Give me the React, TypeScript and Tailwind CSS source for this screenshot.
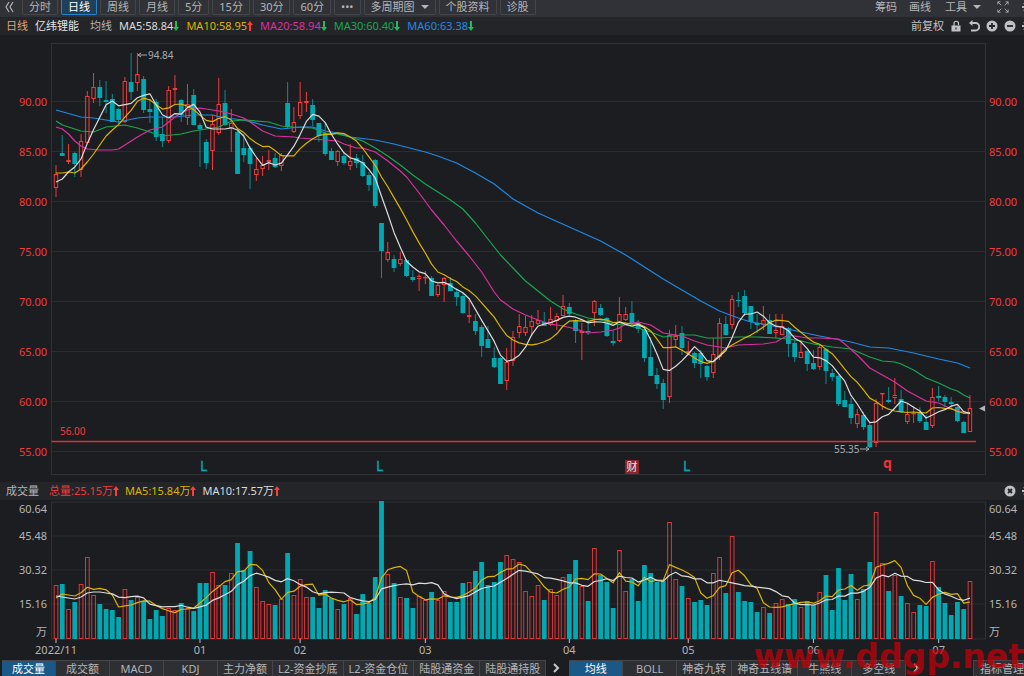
import { useState } from "react";
import clsx from "clsx";

type Candle = [number, number, number, number, number, number];
type Point = [number, number];

const STEP = 6.26;
const LEFT = 51.5;
const RIGHT = 985.5;
const VOLUME_BASE = 639;

const RED = "#f23a3c";
const TEAL = "#00a9b2";
const GRID = "#2b2c30";

const MA5 = "#dcdcdc";
const MA10 = "#dcb400";
const MA20 = "#d8329f";
const MA30 = "#17a851";
const MA60 = "#1f8ae4";

// high, body top, body bottom, low, volume, up (chart units)
const candles: Candle[] = [
  [165, 174, 188, 197, 54, 1], [135, 153, 156, 156, 55, 0], [144, 160, 162, 164, 30, 1],
  [152, 153, 164, 177, 37, 0], [134, 141, 170, 177, 55, 1], [91, 96, 143, 144, 82, 1],
  [73, 87, 99, 103, 44, 1], [80, 87, 98, 106, 35, 0], [81, 100, 102, 113, 30, 0],
  [94, 99, 122, 122, 29, 0], [108, 109, 120, 124, 22, 0], [77, 81, 122, 123, 50, 1],
  [53, 82, 92, 100, 39, 0], [53, 74, 83, 91, 42, 1], [76, 79, 110, 113, 38, 0],
  [99, 109, 112, 123, 20, 0], [99, 102, 137, 141, 29, 0], [117, 134, 141, 147, 23, 0],
  [86, 90, 141, 143, 31, 1], [75, 88, 90, 105, 29, 1], [99, 100, 115, 122, 36, 0],
  [84, 104, 118, 125, 31, 1], [89, 95, 125, 125, 28, 0], [123, 125, 129, 167, 56, 0],
  [139, 142, 163, 169, 56, 0], [115, 124, 151, 170, 67, 1], [78, 104, 133, 135, 54, 1],
  [90, 103, 125, 126, 54, 0], [109, 123, 128, 152, 66, 1], [131, 132, 174, 174, 96, 0],
  [134, 148, 155, 162, 69, 0], [146, 148, 164, 189, 88, 0], [158, 169, 175, 181, 52, 1],
  [156, 165, 169, 176, 38, 1], [150, 160, 162, 170, 35, 1], [153, 158, 167, 168, 34, 0],
  [153, 155, 166, 171, 40, 1], [82, 103, 127, 128, 86, 0], [107, 122, 132, 133, 44, 1],
  [82, 102, 116, 119, 60, 1], [92, 101, 103, 112, 42, 1], [99, 105, 120, 126, 42, 0],
  [123, 123, 136, 142, 31, 0], [122, 133, 154, 156, 49, 0], [148, 151, 160, 160, 41, 0],
  [150, 151, 162, 166, 30, 1], [153, 156, 163, 165, 35, 0], [144, 161, 166, 170, 41, 1],
  [154, 158, 163, 168, 25, 0], [155, 162, 176, 177, 45, 0], [172, 175, 185, 191, 36, 0],
  [159, 160, 206, 208, 62, 0], [223, 223, 251, 278, 138, 0], [242, 252, 260, 262, 65, 1],
  [255, 259, 268, 272, 56, 0], [252, 259, 264, 266, 42, 1], [259, 260, 276, 277, 41, 0],
  [270, 277, 280, 282, 31, 0], [274, 276, 279, 291, 43, 1], [271, 277, 278, 284, 39, 1],
  [276, 278, 296, 296, 47, 0], [284, 285, 295, 297, 39, 1], [277, 278, 285, 302, 48, 1],
  [277, 283, 291, 291, 37, 0], [288, 292, 297, 306, 37, 0], [293, 296, 313, 314, 56, 0],
  [298, 315, 317, 323, 57, 1], [314, 321, 331, 335, 68, 0], [325, 327, 346, 357, 77, 0],
  [326, 339, 348, 348, 54, 0], [347, 358, 367, 368, 57, 0], [357, 358, 384, 384, 77, 0],
  [348, 362, 381, 390, 84, 1], [331, 337, 361, 366, 80, 1], [314, 326, 333, 338, 77, 1],
  [316, 327, 333, 336, 48, 1], [315, 321, 327, 336, 43, 1], [310, 320, 324, 325, 54, 1],
  [312, 322, 326, 326, 39, 0], [307, 319, 325, 326, 50, 1], [313, 316, 321, 330, 44, 1],
  [295, 306, 316, 316, 62, 1], [303, 307, 314, 315, 65, 0], [319, 320, 331, 343, 79, 0],
  [323, 331, 333, 360, 53, 1], [319, 331, 332, 335, 38, 0], [300, 301, 313, 326, 91, 1],
  [304, 308, 315, 316, 64, 0], [317, 318, 336, 337, 57, 0], [330, 341, 343, 346, 31, 0],
  [297, 314, 341, 342, 89, 1], [307, 314, 320, 321, 48, 1], [301, 313, 323, 325, 60, 0],
  [320, 323, 329, 333, 38, 0], [327, 330, 358, 362, 74, 0], [337, 357, 376, 376, 66, 0],
  [368, 375, 384, 389, 57, 0], [379, 383, 400, 409, 58, 0], [330, 335, 397, 403, 117, 1],
  [325, 336, 340, 347, 60, 1], [326, 333, 348, 355, 53, 0], [341, 351, 353, 354, 41, 1],
  [352, 353, 363, 368, 37, 0], [350, 353, 364, 378, 39, 0], [365, 366, 377, 381, 34, 0],
  [338, 354, 373, 378, 66, 1], [318, 323, 357, 360, 82, 1], [316, 324, 335, 335, 46, 0],
  [295, 299, 325, 329, 103, 1], [292, 300, 301, 307, 47, 0], [290, 296, 313, 316, 38, 0],
  [306, 306, 322, 329, 37, 0], [314, 323, 325, 333, 27, 0], [306, 320, 325, 330, 32, 1],
  [314, 320, 334, 334, 26, 0], [314, 330, 333, 338, 36, 1], [314, 326, 335, 335, 40, 1],
  [327, 328, 344, 357, 35, 0], [340, 343, 357, 362, 40, 0], [340, 352, 358, 358, 32, 1],
  [350, 351, 364, 371, 38, 0], [350, 363, 369, 370, 34, 0], [345, 347, 367, 370, 47, 1],
  [348, 349, 371, 384, 64, 0], [369, 373, 377, 381, 29, 0], [375, 376, 404, 406, 71, 0],
  [391, 400, 407, 407, 39, 0], [398, 404, 418, 424, 65, 0], [409, 414, 424, 428, 40, 1],
  [412, 415, 427, 430, 50, 0], [423, 425, 447, 448, 77, 0], [399, 403, 443, 447, 127, 1],
  [393, 393, 394, 410, 76, 1], [387, 400, 402, 403, 48, 0], [378, 395, 398, 404, 64, 1],
  [390, 399, 412, 413, 43, 0], [403, 414, 422, 424, 36, 1], [406, 413, 414, 423, 27, 1],
  [407, 412, 421, 423, 34, 0], [415, 422, 430, 430, 33, 0], [388, 397, 426, 428, 78, 1],
  [386, 396, 398, 401, 52, 0], [395, 397, 402, 407, 36, 0], [397, 402, 404, 408, 24, 0],
  [404, 407, 421, 422, 37, 0], [421, 422, 433, 433, 30, 0], [395, 408, 432, 432, 58, 1],
];

const ma20: Point[] = [
  [0, 127], [1, 129], [2, 134], [3, 141], [4, 146], [5, 149], [7, 150], [9, 150], [10, 149],
  [11, 145], [13, 137], [15, 130], [17, 127], [18, 122], [19, 117], [20, 113], [21, 110],
  [23, 108], [24, 109], [26, 111], [28, 114], [30, 118], [31, 122], [33, 131], [35, 136],
  [38, 137], [39, 138], [41, 139], [43, 140], [45, 141], [46, 144], [48, 148], [49, 148],
  [51, 152], [53, 161], [55, 171], [56, 177], [58, 193], [60, 210], [62, 225], [64, 241],
  [66, 256], [68, 272], [70, 292], [71, 300], [73, 309], [75, 315], [77, 320], [79, 324],
  [81, 326], [83, 329], [85, 333], [87, 332], [89, 330], [90, 328], [91, 324], [93, 322],
  [95, 325], [97, 333], [98, 334], [100, 336], [102, 341], [104, 345], [107, 348], [109, 345],
  [113, 344], [115, 342], [117, 335], [120, 338], [122, 338], [125, 339], [126, 344],
  [128, 355], [130, 368], [132, 375], [134, 382], [136, 391], [139, 401], [141, 403],
  [143, 409], [145, 412], [146, 413],
];

const ma30: Point[] = [
  [0, 121], [1, 125], [2, 127], [4, 131], [6, 132], [8, 127], [11, 125], [13, 128], [15, 132],
  [17, 136], [20, 134], [22, 131], [24, 129], [26, 127], [28, 121], [30, 120], [34, 122],
  [36, 126], [38, 127], [41, 128], [43, 133], [45, 134], [47, 137], [49, 141], [51, 148],
  [53, 156], [55, 165], [57, 175], [59, 184], [61, 192], [63, 200], [65, 209], [67, 223],
  [69, 239], [71, 255], [73, 268], [75, 281], [77, 291], [79, 301], [81, 309], [83, 314],
  [85, 318], [87, 320], [89, 324], [91, 325], [93, 328], [95, 332], [97, 337], [100, 335],
  [102, 335], [104, 338], [106, 338], [109, 337], [112, 337], [115, 338], [117, 339],
  [119, 341], [121, 344], [124, 347], [127, 349], [130, 357], [132, 361], [134, 362],
  [135, 364], [137, 370], [139, 378], [141, 383], [143, 389], [144, 391], [145, 395], [146, 398],
];

const ma60: Point[] = [
  [0, 110], [4, 117], [6, 118], [9, 121], [10, 122], [13, 118], [15, 117], [19, 117], [22, 115],
  [25, 115], [27, 118], [30, 120], [33, 125], [36, 129], [39, 127], [41, 127], [43, 131],
  [45, 133], [47, 137], [51, 140], [54, 144], [59, 152], [61, 156], [64, 163], [67, 173],
  [70, 184], [73, 199], [77, 213], [82, 227], [87, 241], [91, 255], [95, 271], [97, 279],
  [100, 290], [103, 301], [106, 311], [109, 318], [111, 322], [113, 324], [117, 329],
  [119, 332], [122, 336], [127, 342], [130, 347], [133, 348], [137, 353], [141, 359],
  [144, 363], [146, 368],
];

const closes = candles.map((c) => (c[5] ? c[1] : c[2]));
const volumes = candles.map((c) => VOLUME_BASE - c[4]);

const months: [number, string][] = [
  [0, "2022/11"],
  [23, "01"],
  [39, "02"],
  [59, "03"],
  [82, "04"],
  [101, "05"],
  [121, "06"],
  [141, "07"],
];

const prices = ["90.00", "85.00", "80.00", "75.00", "70.00", "65.00", "60.00", "55.00"];
const volumeLabels: [string, number][] = [
  ["60.64", 509],
  ["45.48", 536],
  ["30.32", 570],
  ["15.16", 604],
  ["万", 632],
];

const periods = ["分时", "日线", "周线", "月线", "5分", "15分", "30分", "60分", "•••", "多周期图", "个股资料", "诊股"];
const volumeTabs = ["成交量", "成交额", "MACD", "KDJ", "主力净额", "L2-资金抄底", "L2-资金仓位", "陆股通资金", "陆股通持股"];
const priceTabs = ["均线", "BOLL", "神奇九转", "神奇五线谱", "牛熊线", "多空线"];

const xAt = (i: number) => 56 + i * STEP;

// the first values reach back before the visible range, so they are given
function movingAverage(values: number[], size: number, lead: number[]): Point[] {
  return values.map((_, i) => {
    if (i < size - 1) return [i, lead[i]];
    const part = values.slice(i - size + 1, i + 1);
    return [i, part.reduce((a, b) => a + b, 0) / size];
  });
}

const ma5 = movingAverage(closes, 5, [182, 179, 172, 167]);
const ma10 = movingAverage(closes, 10, [173, 173, 172, 173, 169, 162, 154, 145, 136]);
const volMa5 = movingAverage(volumes, 5, [598, 594, 595, 596]);
const volMa10 = movingAverage(volumes, 10, [596, 597, 598, 599, 597, 593, 592, 592, 593]);

function Line({ points, color }: { points: Point[]; color: string }) {
  return (
    <polyline
      points={points.map(([i, y]) => `${xAt(i).toFixed(1)},${y.toFixed(1)}`).join(" ")}
      fill="none"
      stroke={color}
      strokeWidth="1.2"
      strokeLinejoin="round"
    />
  );
}

function PriceChart() {
  return (
    <svg viewBox="0 35 1024 447" className="block w-full h-auto text-[11px]" role="img" aria-label="日线">
      {prices.map((p, i) => {
        const y = 102 + i * 50;
        return (
          <g key={p}>
            <line x1={LEFT} x2={RIGHT} y1={y - 0.5} y2={y - 0.5} stroke={GRID} />
            <text x="47" y={y + 4} textAnchor="end" fill={RED}>{p}</text>
            <text x="989" y={y + 4} fill={RED}>{p}</text>
          </g>
        );
      })}
      <rect x={LEFT} y="43.5" width={RIGHT - LEFT} height="431" fill="none" stroke="#303135" />
      {candles.map(([high, top, bottom, low, , up], i) => {
        const x = xAt(i);
        const h = Math.max(bottom - top, 1);
        return up ? (
          <g key={i} stroke={RED}>
            <path d={`M${x} ${high}V${top}M${x} ${bottom}V${low}`} />
            <rect x={x - 1.7} y={top + 0.5} width="3.4" height={Math.max(h - 1, 0.4)} fill="none" />
          </g>
        ) : (
          <g key={i}>
            <path d={`M${x} ${high}V${low}`} stroke={TEAL} strokeOpacity="0.8" />
            <rect x={x - 2.4} y={top} width="4.8" height={h} fill={TEAL} />
          </g>
        );
      })}
      <Line points={ma60} color={MA60} />
      <Line points={ma30} color={MA30} />
      <Line points={ma20} color={MA20} />
      <Line points={ma10} color={MA10} />
      <Line points={ma5} color={MA5} />

      <line x1={LEFT} x2="976" y1="441.5" y2="441.5" stroke="#dc3236" strokeWidth="1.3" />
      <text x="60" y="435" fontSize="10" fill={RED}>56.00</text>

      <path d="M138 55H147M141 53L138 55L141 57" stroke="#a8a9ab" fill="none" />
      <text x="148" y="59" fontSize="10" fill="#a8a9ab">94.84</text>
      <path d="M860 449H869M866 447L869 449L866 451" stroke="#a8a9ab" fill="none" />
      <text x="834" y="453" fontSize="10" fill="#a8a9ab">55.35</text>

      <path d="M979 408.5L985 405.5V411.5Z" fill="#b4b5b7" />

      {[200, 376, 683].map((x) => (
        <text key={x} x={x} y="471" fontSize="14" fill={TEAL} stroke={TEAL} strokeWidth="0.3">L</text>
      ))}
      <rect x="625" y="460" width="14" height="14" rx="1" fill="#8c2427" />
      <text x="632" y="471" textAnchor="middle" fill="#e6e6e6">财</text>
      <text x="883" y="468" fontSize="14" fontWeight="700" fill="#ee3338">q</text>
    </svg>
  );
}

function VolumeChart() {
  return (
    <svg viewBox="0 500 1024 160" className="block w-full h-auto text-[11px]" role="img" aria-label="成交量">
      {[536, 570, 604].map((y) => (
        <line key={y} x1={LEFT} x2={RIGHT} y1={y} y2={y} stroke={GRID} />
      ))}
      <rect x={LEFT} y="502" width={RIGHT - LEFT} height="137" fill="none" stroke="#303135" />
      {volumeLabels.map(([label, y]) => (
        <g key={label} fill="#b4b5b7">
          <text x="47" y={y + 4} textAnchor="end">{label}</text>
          <text x="989" y={y + 4}>{label}</text>
        </g>
      ))}
      {candles.map(([, , , , volume, up], i) => {
        const x = xAt(i);
        const y = VOLUME_BASE - volume;
        return up ? (
          <rect key={i} x={x - 1.8} y={y + 0.5} width="3.7" height={volume - 1} fill="none" stroke={RED} strokeOpacity="0.9" />
        ) : (
          <rect key={i} x={x - 2.4} y={y} width="4.8" height={volume} fill={TEAL} />
        );
      })}
      <Line points={volMa5} color={MA10} />
      <Line points={volMa10} color={MA5} />
      {months.map(([i, label]) => (
        <g key={label}>
          <line x1={xAt(i)} x2={xAt(i)} y1="639" y2="643" stroke="#c0c1c3" />
          <text x={xAt(i)} y="654" textAnchor="middle" fill="#b4b5b7">{label}</text>
        </g>
      ))}
    </svg>
  );
}

function Arrow({ up }: { up?: boolean }) {
  return (
    <svg viewBox="0 0 6 10" className="w-[6px] h-[10px]" fill={up ? "#ff3b3b" : "#18c156"}>
      <path d={up ? "M3 0L6 4H4V10H2V4H0Z" : "M3 10L0 6H2V0H4V6H6Z"} />
    </svg>
  );
}

function Value({ text, color, up }: { text: string; color: string; up?: boolean }) {
  return (
    <span className="flex items-center" style={{ color }}>
      {text}
      <Arrow up={up} />
    </span>
  );
}

function Caret() {
  return (
    <svg viewBox="0 0 8 4" className="w-2 h-1" fill="currentColor">
      <path d="M0 0H8L4 4Z" />
    </svg>
  );
}

function Gear() {
  return (
    <svg viewBox="0 0 12 12" className="w-3 h-3 shrink-0" fill="none" stroke="currentColor" strokeWidth="2">
      <circle cx="6" cy="6" r="3" />
      <path d="M6 0V3M6 9V12M0 6H3M9 6H12M2 2L4 4M8 8L10 10M10 2L8 4M4 8L2 10" />
    </svg>
  );
}

function Next() {
  return (
    <button type="button" aria-label="更多" className="w-[23px] pr-1 flex items-center justify-center text-[#c8c9cb]">
      <svg viewBox="0 0 8 10" className="w-2 h-[10px]" fill="none" stroke="currentColor" strokeWidth="2">
        <path d="M2 1L6 5L2 9" />
      </svg>
    </button>
  );
}

function Tabs({ items, active, onPick }: { items: string[]; active: string; onPick: (v: string) => void }) {
  return (
    <div className="flex shrink-0">
      {items.map((item) => (
        <button
          key={item}
          type="button"
          onClick={() => onPick(item)}
          className={clsx(
            "min-w-[54px] px-[5px] border border-l-0 border-b-0 border-[#45464a] whitespace-nowrap",
            item === active ? "bg-[#1a5888] text-white" : "bg-[#2e2f33] text-[#b4b5b7]"
          )}
        >
          {item}
        </button>
      ))}
    </div>
  );
}

export default function App() {
  const [period, setPeriod] = useState("日线");
  const [volumeTab, setVolumeTab] = useState("成交量");
  const [priceTab, setPriceTab] = useState("均线");

  return (
    <div className="relative min-h-screen overflow-hidden bg-[#1c1d20] text-[#b4b5b7] text-[11px] leading-[14px] font-['Noto_Sans','Noto_Sans_CJK_SC',sans-serif]">
      <header className="flex justify-between h-[17px] overflow-hidden bg-[#313237]">
        <div className="flex items-start">
          <button type="button" aria-label="收起" className="w-[22px] h-[14px] pl-[5px] flex items-center">
            <svg viewBox="0 0 9 12" className="w-[9px] h-3" fill="none" stroke="#b4b5b7" strokeWidth="1.2">
              <path d="M4 1L1 6L4 11M8 1L5 6L8 11" />
            </svg>
          </button>
          <div className="flex gap-[3px]">
            {periods.map((item) => (
              <button
                key={item}
                type="button"
                onClick={() => setPeriod(item)}
                className={clsx(
                  "h-[15px] px-[6px] border border-t-0 rounded-b-xs flex items-center gap-1.5 whitespace-nowrap",
                  item === period ? "bg-[#203f58] border-[#2484cc] text-white" : "border-[#45464a]"
                )}
              >
                {item}
                {item === "多周期图" && <Caret />}
              </button>
            ))}
          </div>
        </div>
        <div className="flex items-center h-[14px]">
          <button type="button" className="mr-3">筹码</button>
          <button type="button" className="mr-[14px]">画线</button>
          <button type="button" className="mr-4 flex items-center gap-1.5">
            工具
            <Caret />
          </button>
          <button type="button" aria-label="全屏" className="mr-[13px]">
            <svg viewBox="0 0 14 14" className="w-3 h-[14px]" fill="none" stroke="currentColor">
              <path d="M1 4V1H4M1 1L5 5M10 1H13V4M13 1L9 5M1 10V13H4M1 13L5 9M10 13H13V10M13 13L9 9" />
            </svg>
          </button>
          <span className="w-[2px] overflow-hidden flex"><Gear /></span>
        </div>
      </header>

      <div className="flex justify-between h-[18px] pl-[6px] bg-[#242529]">
        <div className="flex items-center gap-[7px]">
          <span className="text-[#e0a273]">日线</span>
          <span className="text-[#e4e4e4] mr-1">亿纬锂能</span>
          <span>均线</span>
          <Value text="MA5:58.84" color={MA5} />
          <Value text="MA10:58.95" color={MA10} up />
          <Value text="MA20:58.94" color={MA20} />
          <Value text="MA30:60.40" color={MA30} />
          <Value text="MA60:63.38" color={MA60} />
        </div>
        <div className="flex items-center gap-[6px] text-[#c0c1c3]">
          <button type="button">前复权</button>
          <button type="button" aria-label="锁定">
            <svg viewBox="0 0 12 12" className="w-3 h-3">
              <path d="M4 6V3.5A2.2 2.2 0 0 1 8.500 3.500V5" fill="none" stroke="currentColor" strokeWidth="1.2" />
              <path d="M1.500 5.500H10.500V11.500H1.500ZM5.400 7.500V9.500H6.600V7.500Z" fill="currentColor" fillRule="evenodd" />
            </svg>
          </button>
          <button type="button" aria-label="撤销">
            <svg viewBox="0 0 12 12" className="w-3 h-3" fill="none" stroke="currentColor" strokeWidth="1.8">
              <path d="M2 3H7.500A3.500 3.500 0 0 1 7.500 10.500H3" />
              <path d="M4.500 0L1 3L4.500 6Z" fill="currentColor" stroke="none" />
            </svg>
          </button>
          <button type="button" aria-label="放大">
            <svg viewBox="0 0 12 12" className="w-3 h-3">
              <circle cx="6" cy="6" r="5.500" fill="currentColor" />
              <path d="M6 3V9M3 6H9" stroke="#242529" strokeWidth="1.800" />
            </svg>
          </button>
          <button type="button" aria-label="缩小">
            <svg viewBox="0 0 12 12" className="w-3 h-3">
              <circle cx="6" cy="6" r="5.500" fill="currentColor" />
              <path d="M3 6H9" stroke="#242529" strokeWidth="1.800" />
            </svg>
          </button>
          <span className="w-[2px] overflow-hidden flex"><Gear /></span>
        </div>
      </div>

      <PriceChart />

      <div className="flex justify-between h-[18px] pl-[6px] bg-[#242529]">
        <div className="flex items-center gap-[6px]">
          <span className="mr-1">成交量</span>
          <Value text="总量:25.15万" color={RED} up />
          <Value text="MA5:15.84万" color={MA10} up />
          <Value text="MA10:17.57万" color={MA5} up />
        </div>
        <div className="flex items-center gap-[6px] text-[#c0c1c3]">
          <button type="button" aria-label="关闭">
            <svg viewBox="0 0 12 12" className="w-3 h-3">
              <circle cx="6" cy="6" r="5.500" fill="currentColor" />
              <path d="M4 4L8 8M8 4L4 8" stroke="#242529" strokeWidth="1.800" />
            </svg>
          </button>
          <span className="w-[2px] overflow-hidden flex"><Gear /></span>
        </div>
      </div>

      <VolumeChart />

      <footer className="flex h-[16px] pl-[2px] overflow-hidden">
        <Tabs items={volumeTabs} active={volumeTab} onPick={setVolumeTab} />
        <Next />
        <Tabs items={priceTabs} active={priceTab} onPick={setPriceTab} />
        <Next />
        <button type="button" className="ml-auto pl-[6px] border border-r-0 border-b-0 border-[#45464a] bg-[#2e2f33] whitespace-nowrap">
          指标管理
        </button>
      </footer>

      <div className="absolute right-0 bottom-0 h-[38px] leading-[38px] text-[33px] font-bold text-[#c00008]/75 pointer-events-none font-['DejaVu_Sans',sans-serif]">
        www.ddgp.net
      </div>
    </div>
  );
}
